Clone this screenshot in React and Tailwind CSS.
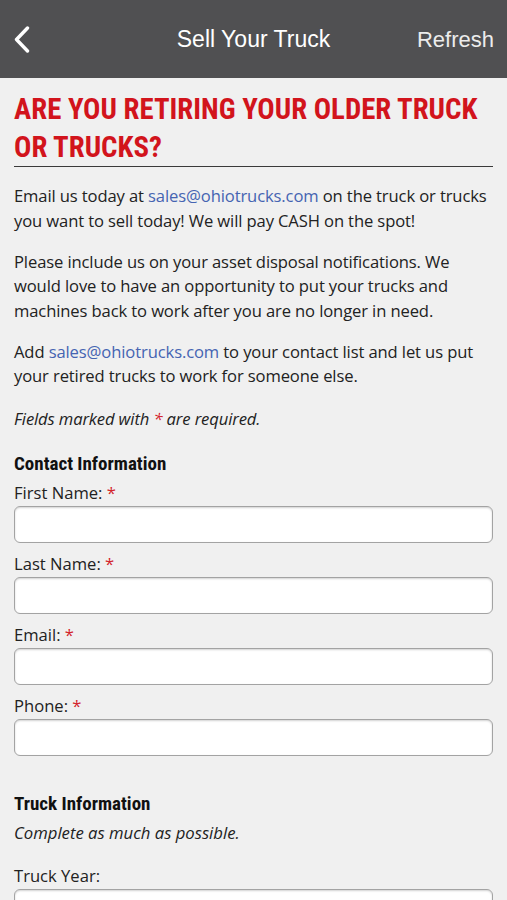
import React from "react";

function Field({ label, required, first }) {
  return (
    <div className={first ? "mt-[5px]" : "mt-[9px]"}>
      <div className="text-[16.6px] leading-[24px] text-[#222]">
        {label}
        {required && <span className="text-[#d3232b]"> *</span>}
      </div>
      <div className="mt-[1px] h-[37px] rounded-[6px] border border-[#a3a3a3] bg-white shadow-[inset_0_1px_2px_rgba(0,0,0,0.18)]" />
    </div>
  );
}

export default function App() {
  return (
    <div className="min-h-[900px] bg-[#f0f0f0] font-['Open_Sans',sans-serif]">
      <header className="grid h-[78px] grid-cols-[1fr_auto_1fr] items-center bg-[#505052] px-[13px] font-['Liberation_Sans',sans-serif] text-white">
        <div className="flex items-center">
          <svg width="18" height="28" viewBox="0 0 18 28">
            <path d="M14.5 3 L3.5 14.5 L14.5 26" fill="none" stroke="white" strokeWidth="3.4" strokeLinecap="round" strokeLinejoin="round" />
          </svg>
        </div>
        <div className="text-[23px] text-white">Sell Your Truck</div>
        <div className="text-right text-[22px] text-[#ececec]">Refresh</div>
      </header>
      <main className="px-[14px] pt-[12px]">
        <h1 className="border-b border-[#3a3a3a] font-['Roboto_Condensed',sans-serif] text-[28.8px] font-bold leading-[38px] text-[#d2141c]">
          ARE YOU RETIRING YOUR OLDER TRUCK OR TRUCKS?
        </h1>
        <div className="mt-[17px] text-[16.6px] leading-[24.5px] tracking-[-0.12px] text-[#222]">
          <p>
            Email us today at <span className="text-[#4564b2]">sales@ohiotrucks.com</span> on the truck or trucks you want to sell today! We will pay CASH on the spot!
          </p>
          <p className="mt-[16.5px]">
            Please include us on your asset disposal notifications. We would love to have an opportunity to put your trucks and machines back to work after you are no longer in need.
          </p>
          <p className="mt-[16.5px]">
            Add <span className="text-[#4564b2]">sales@ohiotrucks.com</span> to your contact list and let us put your retired trucks to work for someone else.
          </p>
          <p className="mt-[18px] italic">
            Fields marked with <span className="text-[#d3232b]">*</span> are required.
          </p>
        </div>
        <h2 className="mt-[21px] font-['Roboto_Condensed',sans-serif] text-[19px] font-bold leading-[24px] text-[#111]">
          Contact Information
        </h2>
        <Field label="First Name:" required first />
        <Field label="Last Name:" required />
        <Field label="Email:" required />
        <Field label="Phone:" required />
        <h2 className="mt-[35.5px] font-['Roboto_Condensed',sans-serif] text-[19px] font-bold leading-[24px] text-[#111]">
          Truck Information
        </h2>
        <p className="mt-[5.7px] text-[16.7px] italic leading-[24.5px] text-[#222]">Complete as much as possible.</p>
        <div className="mt-[18px]">
          <Field label="Truck Year:" first />
        </div>
      </main>
    </div>
  );
}
